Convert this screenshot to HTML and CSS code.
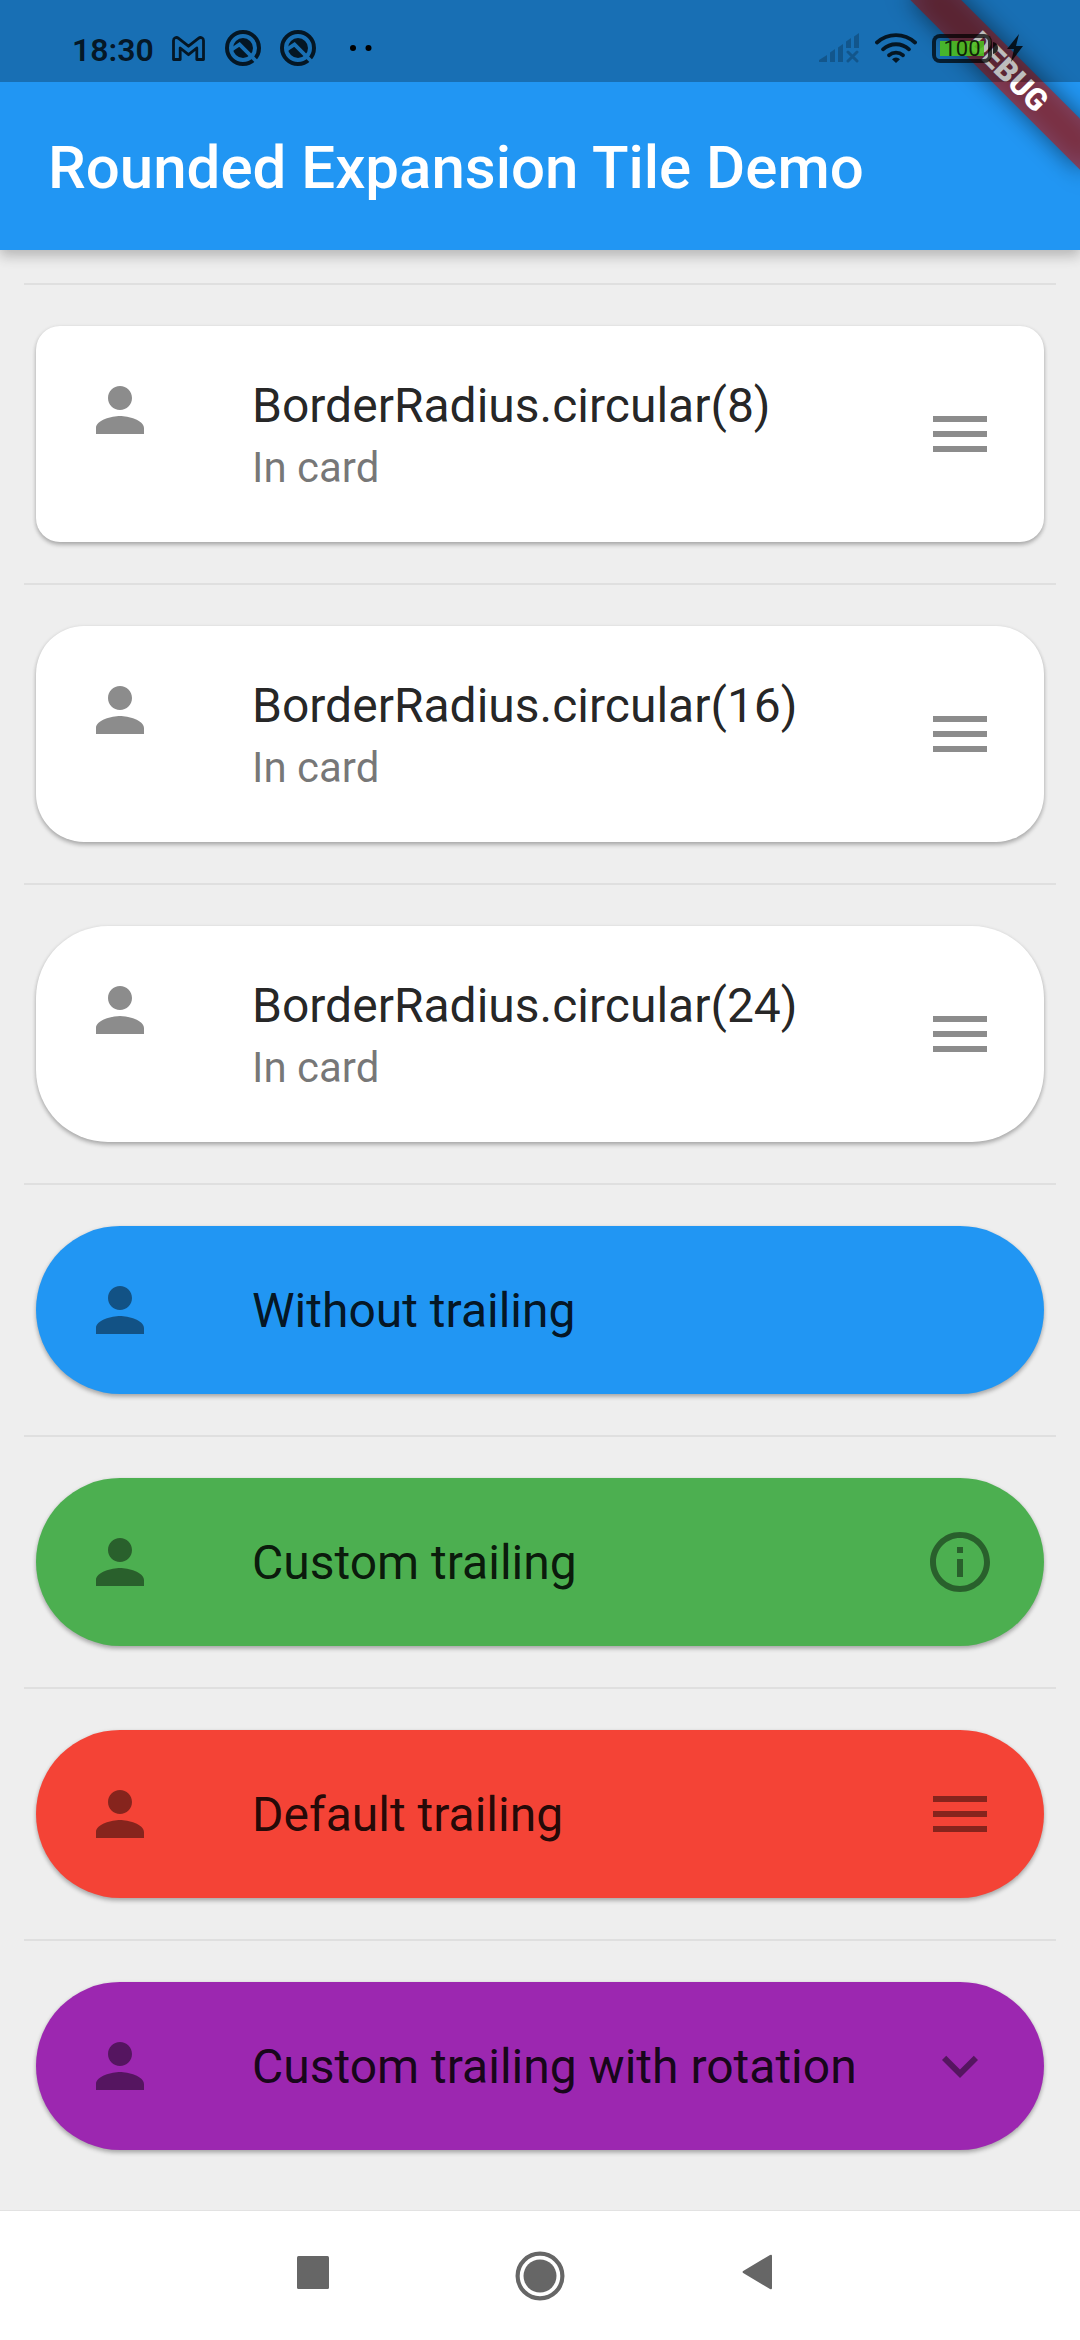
FILE: index.html
```html
<!DOCTYPE html>
<html lang="en">
<head>
<meta charset="utf-8">
<title>Rounded Expansion Tile Demo</title>
<link rel="stylesheet" href="styles.css">
</head>
<body>
<svg class="sprite" aria-hidden="true">
  <symbol id="person" viewBox="0 0 24 24"><path d="M12 12c2.21 0 4-1.79 4-4s-1.79-4-4-4-4 1.79-4 4 1.79 4 4 4zm0 2c-2.67 0-8 1.34-8 4v2h16v-2c0-2.66-5.33-4-8-4z"/></symbol>
  <symbol id="menu" viewBox="0 0 24 24"><path d="M3 18h18v-2H3v2zm0-5h18v-2H3v2zm0-7v2h18V6H3z"/></symbol>
  <symbol id="info" viewBox="0 0 24 24"><path d="M11 7h2v2h-2zm0 4h2v6h-2zm1-9C6.48 2 2 6.48 2 12s4.480 10 10 10 10-4.480 10-10S17.520 2 12 2zm0 18c-4.410 0-8-3.590-8-8s3.590-8 8-8 8 3.590 8 8-3.590 8-8 8z"/></symbol>
  <symbol id="expand" viewBox="0 0 24 24"><path d="M16.590 8.590L12 13.170 7.410 8.590 6 10l6 6 6-6z"/></symbol>
  <mask id="quick-cut" maskUnits="userSpaceOnUse" x="0" y="0" width="36" height="36">
    <rect width="36" height="36" fill="#fff"/>
    <path d="M6 20L14.500 14.500L32 32" fill="none" stroke="#000" stroke-width="3.800"/>
  </mask>
  <symbol id="quick" viewBox="0 0 36 36">
    <g mask="url(#quick-cut)">
      <circle cx="18" cy="18" r="16" fill="none" stroke="currentColor" stroke-width="4"/>
      <circle cx="18" cy="18" r="10"/>
    </g>
  </symbol>
</svg>
<div class="phone">
  <header class="header">
    <div class="status">
      <div class="status-left">
        <span class="clock">18:30</span>
        <svg class="gmail" viewBox="0 0 33 25"><path d="M1.500 4.500C1.500 1.600 4.500.700 6.600 2.300L16.500 10.200L26.400 2.300C28.500.700 31.500 1.600 31.500 4.500V23.500H24.800V12L16.500 18.700L8.200 12V23.500H1.500Z" fill="none" stroke="currentColor" stroke-width="2.800" stroke-linejoin="round"/></svg>
        <svg class="quick"><use href="#quick"/></svg>
        <svg class="quick"><use href="#quick"/></svg>
        <svg class="dots" viewBox="0 0 22 6"><circle cx="3" cy="3" r="3"/><circle cx="18.500" cy="3" r="3"/></svg>
      </div>
      <div class="status-right">
        <svg class="signal" viewBox="0 0 40 30"><path d="M0 29v-2l8-5v7zM11 19.500l5-3.500v13h-5zM19 14.500l5-3.500v18h-5zM27 8.500l5-3.500v10h-5zM35 3.500L40 0v15h-5z"/><path d="M29 19l9 9m0-9l-9 9" stroke="currentColor" stroke-width="3" stroke-linecap="round"/></svg>
        <svg class="wifi" viewBox="0 0 42 30"><g fill="none" stroke="currentColor" stroke-width="3.800" stroke-linecap="round"><path d="M2 9.500a28 28 0 0 1 38 0"/><path d="M8 16.300a19.200 19.200 0 0 1 26 0"/><path d="M14 22.200a11 11 0 0 1 14 0"/></g><path d="M17 26.300a5.500 5.500 0 0 1 8 0L21 30z"/></svg>
        <div class="battery"><span class="charge">100</span></div>
        <svg class="cap" viewBox="0 0 5 12"><path d="M0 0q5 1 5 6t-5 6z"/></svg>
        <svg class="bolt" viewBox="0 0 16 28"><path d="M12 0L0 15h7L4 28 16 12H9z"/></svg>
      </div>
    </div>
    <h1 class="title">Rounded Expansion Tile Demo</h1>
  </header>
  <main class="list">
    <hr class="divider">
    <article class="tile card r8">
      <svg class="icon lead"><use href="#person"/></svg>
      <div class="text"><div class="name">BorderRadius.circular(8)</div><div class="sub">In card</div></div>
      <svg class="icon"><use href="#menu"/></svg>
    </article>
    <hr class="divider">
    <article class="tile card r16">
      <svg class="icon lead"><use href="#person"/></svg>
      <div class="text"><div class="name">BorderRadius.circular(16)</div><div class="sub">In card</div></div>
      <svg class="icon"><use href="#menu"/></svg>
    </article>
    <hr class="divider">
    <article class="tile card r24">
      <svg class="icon lead"><use href="#person"/></svg>
      <div class="text"><div class="name">BorderRadius.circular(24)</div><div class="sub">In card</div></div>
      <svg class="icon"><use href="#menu"/></svg>
    </article>
    <hr class="divider">
    <article class="tile blue">
      <svg class="icon"><use href="#person"/></svg>
      <div class="text"><div class="name">Without trailing</div></div>
    </article>
    <hr class="divider">
    <article class="tile green">
      <svg class="icon"><use href="#person"/></svg>
      <div class="text"><div class="name">Custom trailing</div></div>
      <svg class="icon"><use href="#info"/></svg>
    </article>
    <hr class="divider">
    <article class="tile red">
      <svg class="icon"><use href="#person"/></svg>
      <div class="text"><div class="name">Default trailing</div></div>
      <svg class="icon"><use href="#menu"/></svg>
    </article>
    <hr class="divider">
    <article class="tile purple">
      <svg class="icon"><use href="#person"/></svg>
      <div class="text"><div class="name">Custom trailing with rotation</div></div>
      <svg class="icon"><use href="#expand"/></svg>
    </article>
  </main>
  <nav class="nav">
    <svg class="recents" viewBox="0 0 32 33"><rect width="32" height="33" rx="1.500"/></svg>
    <svg class="home" viewBox="0 0 50 50"><circle cx="25" cy="25" r="22.400" fill="none" stroke="currentColor" stroke-width="4.200"/><circle cx="25" cy="25" r="16.500"/></svg>
    <svg class="back" viewBox="0 0 31 38"><path d="M2 17.500L28 2Q30 1 30 3V35Q30 37 28 36L2 20.500Q-1 19 2 17.500Z"/></svg>
  </nav>
  <div class="banner"><span class="banner-text">DEBUG</span></div>
</div>
</body>
</html>
```

FILE: styles.css
```css
* { box-sizing: border-box; }

body {
  margin: 0;
  font-family: Roboto, "Noto Sans", sans-serif;
}

svg { display: block; fill: currentColor; }

.sprite { position: absolute; width: 0; height: 0; }

.phone {
  position: relative;
  display: flex;
  flex-direction: column;
  width: 1080px;
  height: 2340px;
  overflow: hidden;
  background: #eeeeee;
}

/* App bar */
.header {
  position: relative;
  height: 250px;
  background: #2196f3;
  box-shadow: 0 6px 12px rgba(0, 0, 0, .17), 0 3px 16px rgba(0, 0, 0, .1);
}

.title {
  margin: 0;
  padding: 51px 48px 0;
  font-size: 60px;
  font-weight: 500;
  line-height: 70px;
  color: #fff;
  white-space: nowrap;
}

/* System status bar, translucent over the app */
.status {
  position: relative;
  z-index: 3;
  display: flex;
  justify-content: space-between;
  height: 82px;
  padding: 14px 57px 0 72px;
  background: rgba(0, 0, 0, .26);
  color: rgba(0, 0, 0, .8);
}

.status-left, .status-right { display: flex; align-items: center; height: 68px; }

.clock { width: 100px; font-size: 32px; font-weight: 600; line-height: 38px; padding-top: 3px; }
.gmail { width: 33px; height: 25px; margin-right: 20px; }
.quick { width: 36px; height: 36px; margin-right: 19px; }
.dots { width: 22px; height: 6px; margin-left: 15px; color: #000; }

.signal { width: 40px; height: 30px; margin-right: 16px; color: rgba(0, 0, 0, .22); }
.wifi { width: 42px; height: 30px; margin-right: 15px; }
.battery {
  width: 60px;
  height: 29px;
  padding: 3px 4px;
  border: 4px solid rgba(0, 0, 0, .72);
  border-radius: 8px;
  background: rgba(76, 190, 32, .9) content-box;
}
.charge { display: block; text-align: center; font-size: 22px; line-height: 16px; color: rgba(0, 0, 0, .82); }
.cap { width: 5px; height: 12px; margin: 0 9px 0 1px; }
.bolt { width: 16px; height: 28px; }

/* Tile list */
.list {
  display: flex;
  flex-direction: column;
  flex: 1;
  padding: 4px 24px 0;
}

.divider {
  width: 100%;
  height: 2px;
  margin: 29px 0;
  border: 0;
  background: #dfdfdf;
}

.tile {
  display: flex;
  align-items: center;
  height: 168px;
  margin: 12px;
  padding: 0 48px;
  border-radius: 84px;
  box-shadow: 0 3px 4px rgba(0, 0, 0, .22), 0 1px 4px rgba(0, 0, 0, .12);
}

.card { height: 216px; background: #fff; }
.r8 { border-radius: 24px; }
.r16 { border-radius: 48px; }
.r24 { border-radius: 72px; }
.blue { background: #2196f3; }
.green { background: #4caf50; }
.red { background: #f44336; }
.purple { background: #9c27b0; }

.icon { width: 72px; height: 72px; color: rgba(0, 0, 0, .45); }
.lead { align-self: flex-start; margin-top: 48px; }

.text { flex: 1; margin-left: 96px; padding-top: 2px; white-space: nowrap; }
.card .text { padding-top: 1px; }
.name { font-size: 48px; line-height: 56px; color: rgba(0, 0, 0, .87); }
.sub { margin-top: 9px; font-size: 42px; line-height: 49px; color: rgba(0, 0, 0, .54); }

/* System navigation */
.nav {
  display: flex;
  align-items: flex-start;
  height: 130px;
  padding: 42px 307px 0 297px;
  border-top: 1px solid #e2e2e2;
  background: #fff;
  color: #666;
}

.recents { width: 32px; height: 33px; margin-top: 3px; }
.home { width: 50px; height: 50px; margin: -2px 0 0 185.500px; }
.back { width: 31px; height: 38px; margin: 0 0 0 177.500px; }

/* Diagonal ribbon in the top right corner */
.banner {
  position: absolute;
  z-index: 2;
  top: 84px;
  left: 960px;
  width: 240px;
  height: 36px;
  transform: rotate(45deg);
  transform-origin: 120px -84px;
}

.banner::before {
  content: "";
  position: absolute;
  inset: 0;
  background: rgba(0, 0, 0, .5);
  filter: blur(12px);
}

.banner-text {
  position: relative;
  display: block;
  background: rgba(183, 28, 28, .627);
  font-size: 30.600px;
  font-weight: 900;
  line-height: 36px;
  text-align: center;
  color: #fff;
}
```
